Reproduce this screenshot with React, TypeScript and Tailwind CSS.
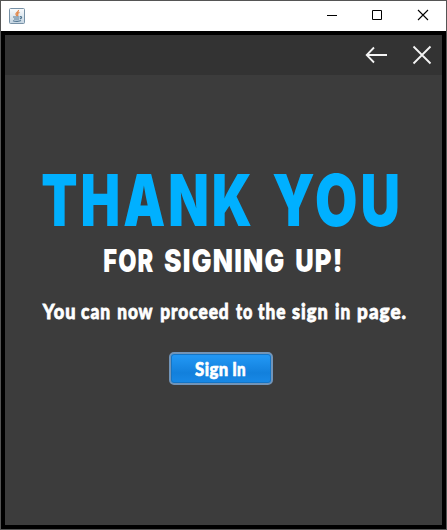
import { useLayoutEffect, useRef } from "react";

type Word = { text: string; width: number; gap?: number };

/* Condenses one word so that its visible glyphs span the given width. */
function CondensedWord({ text, width, gap = 0 }: Word) {
  const ref = useRef<HTMLSpanElement>(null);

  useLayoutEffect(() => {
    const el = ref.current;
    const ctx = document.createElement("canvas").getContext("2d");
    if (!el || !ctx) return;
    const css = getComputedStyle(el);
    const spacing = parseFloat(css.letterSpacing) || 0;
    ctx.font = `${css.fontWeight} ${css.fontSize} ${css.fontFamily}`;
    const box = ctx.measureText(text);
    const ink =
      box.actualBoundingBoxLeft + box.actualBoundingBoxRight + spacing * (text.length - 1);
    el.style.transform = `scaleX(${width / ink}) translateX(${box.actualBoundingBoxLeft}px)`;
  }, [text, width]);

  return (
    <span className="block shrink-0" style={{ width, marginLeft: gap }}>
      <span ref={ref} className="inline-block origin-left whitespace-nowrap">
        {text}
      </span>
    </span>
  );
}

function Line({ words, className }: { words: Word[]; className: string }) {
  return (
    <div className={`flex ${className}`}>
      {words.map((word) => (
        <CondensedWord key={word.text} {...word} />
      ))}
    </div>
  );
}

const thanks: Word[] = [
  { text: "THANK", width: 209 },
  { text: "YOU", width: 125, gap: 22 },
];
const signingUp: Word[] = [
  { text: "FOR", width: 49.5 },
  { text: "SIGNING", width: 120, gap: 10.5 },
  { text: "UP!", width: 45, gap: 12 },
];
const proceed: Word[] = [
  { text: "You", width: 32.5 },
  { text: "can", width: 29, gap: 7 },
  { text: "now", width: 35, gap: 8 },
  { text: "proceed", width: 67.5, gap: 7.5 },
  { text: "to", width: 16, gap: 7.5 },
  { text: "the", width: 27, gap: 6 },
  { text: "sign", width: 35.5, gap: 7 },
  { text: "in", width: 15, gap: 8 },
  { text: "page.", width: 48, gap: 7.5 },
];
const signIn: Word[] = [
  { text: "Sign", width: 33 },
  { text: "In", width: 12.5, gap: 5 },
];

function JavaIcon() {
  return (
    <svg width="16" height="16" viewBox="0 0 16 16" fill="none">
      <defs>
        <linearGradient id="tile" x1="0" y1="0" x2="0" y2="1">
          <stop offset="0" stopColor="#fafcfd" />
          <stop offset="1" stopColor="#c5d5e2" />
        </linearGradient>
      </defs>
      <rect x="0.5" y="0.5" width="15" height="15" rx="1" fill="url(#tile)" stroke="#7791a6" />
      <path d="M9.5 2C10 4 6.3 4.4 7 6.3C7.2 7 8 7.4 7.8 8.2M10.5 4.3C8.6 5 8.1 5.8 8.8 6.7C9.2 7.2 8.8 7.7 8.4 8.2" stroke="#e2884c" strokeWidth="1.3" />
      <path d="M4 9H10.5M11 8.7C13.2 8.2 13.2 10.3 10.8 10.8M5 11H10M4 12.7C6 13.6 10.5 13.5 12 12.6" stroke="#537792" strokeWidth="1.2" />
    </svg>
  );
}

export default function App() {
  return (
    <div className="flex h-[530px] w-[447px] flex-col border border-[#555] bg-black font-['Lato','Liberation_Sans',sans-serif]">
      <div className="flex h-[30px] shrink-0 items-center justify-between bg-white pl-2">
        <JavaIcon />
        <svg width="120" height="30" viewBox="326 1 120 30" fill="none" stroke="#000">
          <path d="M327 15.5H337" />
          <path d="M372.5 10.5H381.5V19.5H372.5Z" />
          <path d="M418 10L428 20M428 10L418 20" strokeWidth="1.1" />
        </svg>
      </div>
      <div className="mx-1 mt-1 mb-1 flex grow flex-col bg-[#3c3c3c]">
        <div className="flex h-10 shrink-0 justify-end bg-[#333]">
          <svg width="82" height="40" viewBox="360 35 82 40" fill="none" stroke="#f4f4f4" strokeWidth="1.8">
            <path d="M387 55H367M374 47.5L366.7 55L374 62.5" />
            <path d="M413.5 46.5L430.5 63.5M430.5 46.5L413.5 63.5" />
          </svg>
        </div>
        <h1 className="mt-[89px] ml-[37px]">
          <Line words={thanks} className="font-['Inter','Liberation_Sans',sans-serif] text-[71.5px] leading-[72px] font-black tracking-[4px] text-[#00b0ff]" />
        </h1>
        <h2 className="mt-[9px] ml-[99px]">
          <Line words={signingUp} className="font-['Inter','Liberation_Sans',sans-serif] text-[31px] leading-[32px] font-black tracking-[1.5px] text-white" />
        </h2>
        <div className="mt-[22px] ml-[36.5px]">
          <Line words={proceed} className="text-[21.5px] leading-[24px] font-black tracking-[1.2px] text-white [-webkit-text-stroke:0.8px_white]" />
        </div>
        <button className="mt-[29px] ml-[163.5px] flex h-[33px] w-[104px] items-center rounded-[5px] border-2 border-[#7194b8] bg-linear-to-b from-[#2196f3] from-10% via-[#1280dc] via-65% to-[#1889e7] pl-[24.5px] shadow-[inset_0_0_0_1px_#1475c5]">
          <Line words={signIn} className="text-[18px] leading-[24px] font-black tracking-[0.5px] text-white [-webkit-text-stroke:0.6px_white]" />
        </button>
      </div>
    </div>
  );
}
